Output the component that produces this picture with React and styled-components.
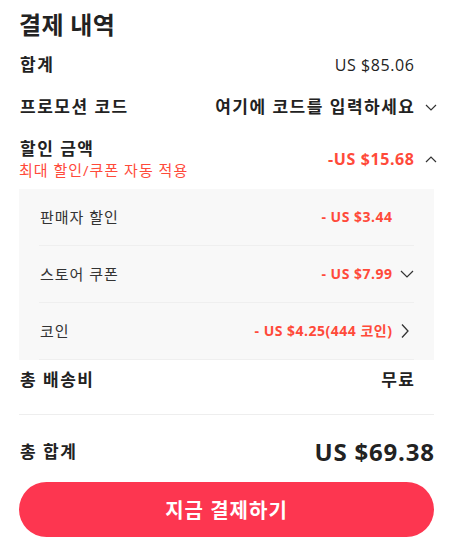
import React from 'react';
import styled, { createGlobalStyle } from 'styled-components';

const GlobalStyle = createGlobalStyle`
  html, body {
    margin: 0;
    padding: 0;
    background: #fff;
  }
  body {
    font-family: "Open Sans", "Noto Sans CJK KR", sans-serif;
    color: #222;
  }
`;

const RED = '#ff4a3a';

const Page = styled.div`
  width: 415px;
  padding: 0 23px 0 19px;
`;

const Title = styled.h1`
  margin: 8px 0 2px;
  font-size: 24px;
  line-height: 34px;
  font-weight: 700;
  color: #222;
  letter-spacing: 0.3px;
`;

const Row = styled.div`
  display: grid;
  grid-template-columns: 1fr auto 23px;
  align-items: center;
  height: ${p => p.h || 42}px;
  margin-right: -3px;
`;

// Korean labels: the reference face is wider than Noto CJK, so size/track up a bit
const Label = styled.div`
  font-size: 17px;
  line-height: 22px;
  font-weight: 700;
  letter-spacing: 1.5px;
  color: #222;
  padding-left: 1px;
`;

const Sub = styled.div`
  font-size: 15px;
  line-height: 20px;
  letter-spacing: 1px;
  color: ${RED};
`;

const Value = styled.div`
  font-size: ${p => (p.ko ? 17 : 16)}px;
  line-height: 22px;
  letter-spacing: ${p => (p.ko ? 1.5 : 0.6)}px;
  margin-right: ${p => (p.ko ? -1.5 : -0.6)}px;
  font-weight: ${p => p.w || 500};
  color: ${p => (p.red ? RED : '#222')};
  text-align: right;
`;

const IconSlot = styled.div`
  display: flex;
  align-items: center;
  justify-content: flex-end;
  height: 100%;
`;

const DiscountRow = styled(Row)`
  height: auto;
  padding: 10px 0 9px;
`;

const Panel = styled.div`
  background: #f8f8f8;
  padding: 0 20px;
`;

const SubRow = styled.div`
  display: grid;
  grid-template-columns: 1fr auto 22px;
  align-items: center;
  height: 56px;
  border-bottom: 1px solid #efefef;
`;

const SubLabel = styled.div`
  font-size: 15px;
  line-height: 20px;
  letter-spacing: 1px;
  color: #333;
  padding-left: 1px;
`;

const SubValue = styled.div`
  font-size: 14px;
  line-height: 20px;
  letter-spacing: 0.5px;
  margin-right: -0.5px;
  font-weight: 700;
  color: ${RED};
  text-align: right;
`;

const Divider = styled.div`
  height: 1px;
  background: #eeeeee;
  margin-top: 14px;
`;

const TotalRow = styled.div`
  display: flex;
  align-items: center;
  justify-content: space-between;
  padding-top: 20px;
`;

const TotalAmount = styled.div`
  font-size: 24px;
  line-height: 34px;
  font-weight: 700;
  letter-spacing: 0.8px;
  margin-right: -0.8px;
  color: #222;
`;

const PayButton = styled.button`
  display: block;
  width: 100%;
  height: 55px;
  margin-top: 13px;
  border: none;
  border-radius: 28px;
  background: #fd3650;
  color: #fff;
  font-family: "Open Sans", "Noto Sans CJK KR", sans-serif;
  font-size: 20px;
  font-weight: 700;
  letter-spacing: 1px;
`;

const Chevron = ({ dir = 'down', size = 'sm' }) => {
  if (dir === 'right') {
    return (
      <svg width="10" height="16" viewBox="0 0 10 16" style={{ marginRight: 4 }}>
        <polyline points="2,1.5 8,8 2,14.5" fill="none" stroke="#333" strokeWidth="1.3" />
      </svg>
    );
  }
  const w = size === 'lg' ? 14 : 12;
  const h = size === 'lg' ? 8 : 7;
  const pts = dir === 'up'
    ? `1,${h - 1} ${w / 2},1 ${w - 1},${h - 1}`
    : `1,1 ${w / 2},${h - 1} ${w - 1},1`;
  return (
    <svg width={w} height={h} viewBox={`0 0 ${w} ${h}`}>
      <polyline points={pts} fill="none" stroke="#333" strokeWidth="1.2" />
    </svg>
  );
};

export default function App() {
  return (
    <Page>
      <GlobalStyle />
      <Title>결제 내역</Title>
      <Row h={42}>
        <Label>합계</Label>
        <Value>US $85.06</Value>
        <IconSlot />
      </Row>
      <Row h={42}>
        <Label>프로모션 코드</Label>
        <Value ko w={700}>여기에 코드를 입력하세요</Value>
        <IconSlot><Chevron dir="down" /></IconSlot>
      </Row>
      <DiscountRow>
        <div>
          <Label>할인 금액</Label>
          <Sub>최대 할인/쿠폰 자동 적용</Sub>
        </div>
        <Value red w={700}>-US $15.68</Value>
        <IconSlot><Chevron dir="up" /></IconSlot>
      </DiscountRow>
      <Panel>
        <SubRow>
          <SubLabel>판매자 할인</SubLabel>
          <SubValue>- US $3.44</SubValue>
          <IconSlot />
        </SubRow>
        <SubRow>
          <SubLabel>스토어 쿠폰</SubLabel>
          <SubValue>- US $7.99</SubValue>
          <IconSlot><Chevron dir="down" size="lg" /></IconSlot>
        </SubRow>
        <SubRow>
          <SubLabel>코인</SubLabel>
          <SubValue>- US $4.25(444 코인)</SubValue>
          <IconSlot><Chevron dir="right" /></IconSlot>
        </SubRow>
      </Panel>
      <Row h={40}>
        <Label>총 배송비</Label>
        <Value ko w={700}>무료</Value>
        <IconSlot />
      </Row>
      <Divider />
      <TotalRow>
        <Label>총 합계</Label>
        <TotalAmount>US $69.38</TotalAmount>
      </TotalRow>
      <PayButton>지금 결제하기</PayButton>
    </Page>
  );
}
